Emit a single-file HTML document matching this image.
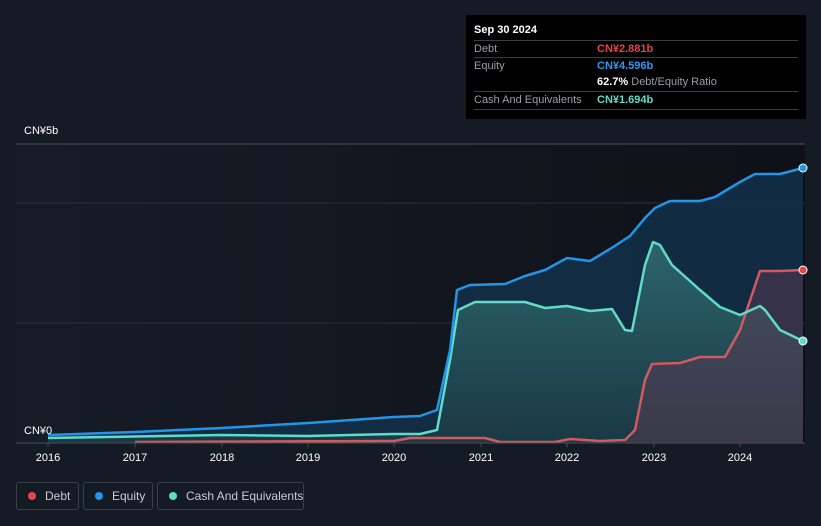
<!DOCTYPE html><html><head><style>
html,body{margin:0;width:821px;height:526px;overflow:hidden}
body{background:#151b25;font-family:"Liberation Sans","Noto Sans CJK SC",sans-serif;position:relative}
.t{position:absolute;font-size:11px;color:#fff}
.tip{position:absolute;left:466px;top:15px;width:340px;height:104px;background:#000;font-size:11px}
.row{position:absolute;left:8px;width:324px;border-top:1px solid #3a3d44;height:17px;line-height:17px;color:#9a9ea6;white-space:nowrap}
.row span{position:absolute;left:123px;font-weight:bold}
.lg{position:absolute;top:482px;height:28px;border:1px solid #3a3f4a;border-radius:3px;color:#c8ccd2;font-size:12px;line-height:26px;box-sizing:border-box;white-space:nowrap}
.lg i{position:absolute;left:11px;top:9px;width:8px;height:8px;border-radius:50%}
</style></head><body>
<svg width="821" height="526" style="position:absolute;left:0;top:0">
<defs>
<linearGradient id="pa" x1="0" y1="0" x2="1" y2="0"><stop offset="0" stop-color="#161c27"/><stop offset="1" stop-color="#0e1117"/></linearGradient>
<linearGradient id="gc" x1="0" y1="0" x2="0" y2="1"><stop offset="0" stop-color="#2f6a70" stop-opacity=".9"/><stop offset="1" stop-color="#1b3a44" stop-opacity=".9"/></linearGradient>
</defs>
<rect x="16" y="144" width="789" height="299" fill="url(#pa)"/>
<line x1="16" y1="144" x2="805" y2="144" stroke="#4a4e57"/>
<line x1="16" y1="203" x2="805" y2="203" stroke="#2a2f38"/>
<line x1="16" y1="323" x2="805" y2="323" stroke="#2a2f38"/>
<path d="M48,435 L135,432 L222,428 L308,423 L394,417 L420,416 L437,410 L450,350 L457,290 L470,285 L505,284 L525,276 L545,270 L567,258 L590,261 L610,249 L630,236 L645,218 L655,208 L670,201 L700,201 L715,197 L740,182 L755,174 L780,174 L803,168 L803,443 L48,443Z" fill="#12304a" opacity=".85"/>
<path d="M48,438 L222,435 L308,436 L394,434 L420,434 L437,430 L450,360 L458,310 L475,302 L525,302 L545,308 L567,306 L590,311 L612,309 L625,330 L632,331 L645,265 L653,242 L660,245 L672,265 L700,290 L720,307 L740,315 L760,306 L765,310 L780,330 L803,341 L803,443 L48,443Z" fill="url(#gc)"/>
<path d="M625,440 L635,430 L645,380 L652,364 L680,363 L700,357 L725,357 L740,330 L760,271 L780,271 L803,270 L803,443 L625,443Z" fill="#5a3a50" opacity=".5"/>
<g fill="none" stroke-width="2.5" stroke-linejoin="round">
<path d="M135,442 L394,441 L410,438 L450,438 L485,438 L500,442 L555,442 L570,439 L600,441 L625,440 L635,430 L645,380 L652,364 L680,363 L700,357 L725,357 L740,330 L760,271 L780,271 L803,270" stroke="#d05a62"/>
<path d="M48,438 L222,435 L308,436 L394,434 L420,434 L437,430 L450,360 L458,310 L475,302 L525,302 L545,308 L567,306 L590,311 L612,309 L625,330 L632,331 L645,265 L653,242 L660,245 L672,265 L700,290 L720,307 L740,315 L760,306 L765,310 L780,330 L803,341" stroke="#5fdcc8"/>
<path d="M48,435 L135,432 L222,428 L308,423 L394,417 L420,416 L437,410 L450,350 L457,290 L470,285 L505,284 L525,276 L545,270 L567,258 L590,261 L610,249 L630,236 L645,218 L655,208 L670,201 L700,201 L715,197 L740,182 L755,174 L780,174 L803,168" stroke="#2494e6"/>
</g>
<circle cx="803" cy="168" r="4" fill="#2494e6" stroke="#fff" stroke-width="1"/>
<circle cx="803" cy="270" r="4" fill="#e04848" stroke="#fff" stroke-width="1"/>
<circle cx="803" cy="341" r="4" fill="#5fdcc8" stroke="#fff" stroke-width="1"/>
<line x1="16" y1="443" x2="805" y2="443" stroke="#4a4e57"/>
<g stroke="#4a4e57"><line x1="48" y1="443" x2="48" y2="447"/><line x1="135" y1="443" x2="135" y2="447"/><line x1="222" y1="443" x2="222" y2="447"/><line x1="308" y1="443" x2="308" y2="447"/><line x1="394" y1="443" x2="394" y2="447"/><line x1="481" y1="443" x2="481" y2="447"/><line x1="567" y1="443" x2="567" y2="447"/><line x1="654" y1="443" x2="654" y2="447"/><line x1="740" y1="443" x2="740" y2="447"/></g>
<g fill="#fff" font-size="11" text-anchor="middle" font-family="Liberation Sans,sans-serif">
<text x="48" y="461">2016</text><text x="135" y="461">2017</text><text x="222" y="461">2018</text><text x="308" y="461">2019</text><text x="394" y="461">2020</text><text x="481" y="461">2021</text><text x="567" y="461">2022</text><text x="654" y="461">2023</text><text x="740" y="461">2024</text>
</g>
</svg>
<div class="t" style="left:24px;top:125px">CN¥5b</div>
<div class="t" style="left:24px;top:425px">CN¥0</div>
<div class="tip">
<div style="position:absolute;left:8px;top:9px;color:#fff;font-weight:bold">Sep 30 2024</div>
<div class="row" style="top:25px">Debt<span style="color:#e8424a">CN¥2.881b</span></div>
<div class="row" style="top:42px">Equity<span style="color:#2a9af0">CN¥4.596b</span></div>
<div class="row" style="top:59px;border-top:none"><span style="color:#fff">62.7% <b style="font-weight:normal;color:#9a9ea6">Debt/Equity Ratio</b></span></div>
<div class="row" style="top:76px;border-bottom:1px solid #3a3d44">Cash And Equivalents<span style="color:#5fdcc8">CN¥1.694b</span></div>
</div>
<div class="lg" style="left:16px;width:63px"><i style="background:#e8424a"></i><span style="position:absolute;left:28px">Debt</span></div>
<div class="lg" style="left:83px;width:70px"><i style="background:#2494e6"></i><span style="position:absolute;left:28px">Equity</span></div>
<div class="lg" style="left:157px;width:147px"><i style="background:#5fdcc8"></i><span style="position:absolute;left:28px">Cash And Equivalents</span></div>
</body></html>
